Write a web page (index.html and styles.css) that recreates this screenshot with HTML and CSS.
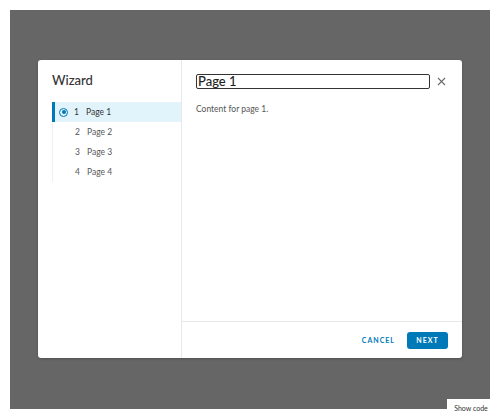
FILE: index.html
```html
<!DOCTYPE html>
<html lang="en">
<head>
  <meta charset="UTF-8" />
  <title>Wizard</title>
  <link rel="stylesheet" href="styles.css">
</head>
<body>

  <div class="stage">
    <div class="modal">
      <!-- step navigation -->
      <div class="side">
        <h3 class="side-title">Wizard</h3>
        <ul class="steps">
          <li class="step active">
            <span class="dot"></span><span class="num">1</span>Page 1
          </li>
          <li class="step"><span class="num">2</span>Page 2</li>
          <li class="step"><span class="num">3</span>Page 3</li>
          <li class="step"><span class="num">4</span>Page 4</li>
        </ul>
      </div>

      <div class="main">
        <div class="main-head">
          <h3 class="page-title">Page 1</h3>
          <button type="button" class="close">
            <svg width="9" height="9" viewBox="0 0 9 9">
              <path d="M1 1 L8 8 M8 1 L1 8" stroke="#6a6a6a" stroke-width="1.1" fill="none" />
            </svg>
          </button>
        </div>
        <div class="main-body">Content for page 1.</div>
        <div class="main-foot">
          <button type="button" class="btn-link">Cancel</button>
          <button type="button" class="btn-primary">Next</button>
        </div>
      </div>
    </div>
  </div>

  <div class="show-code">Show code</div>

</body>
</html>
```

FILE: styles.css
```css
* { box-sizing: border-box; }

body {
  margin: 0;
  background: #fff;
  font-family: Lato, "Noto Sans", sans-serif;
  color: #333;
}

.stage {
  margin: 10px;
  height: 399px;
  background: #666;
  display: flex;
  justify-content: center;
  align-items: flex-start;
  padding-top: 50px;
}

.modal {
  width: 424px;
  height: 298px;
  background: #fff;
  border-radius: 3px;
  display: flex;
  box-shadow: 0 1px 3px rgba(0,0,0,0.2);
}

.side {
  width: 144px;
  border-right: 1px solid #e8e8e8;
  padding: 13px 0 0 14px;
}

.side-title {
  margin: 0 0 14px;
  font-size: 13px;
  font-weight: 500;
  color: #333;
  line-height: 15px;
}

.steps {
  list-style: none;
  margin: 0;
  padding: 0;
  border-left: 1px solid #f0f0f0;
  height: 80px;
}

.step {
  height: 20px;
  display: flex;
  align-items: center;
  padding-left: 22px;
  font-size: 8.5px;
  color: #565656;
  position: relative;
}

.step.active {
  background: #e1f4fb;
  border-left: 3px solid #0079b8;
  margin-left: -1px;
  padding-left: 4px;
  color: #333;
}

.dot {
  width: 9px;
  height: 9px;
  border-radius: 50%;
  border: 1px solid #0079b8;
  margin-right: 6px;
  display: flex;
  align-items: center;
  justify-content: center;
}

.dot::after {
  content: "";
  width: 4px;
  height: 4px;
  border-radius: 50%;
  background: #0079b8;
}

.num {
  width: 12px;
}

.main {
  flex: 1;
  display: flex;
  flex-direction: column;
}

.main-head {
  display: flex;
  align-items: center;
  padding: 14px 15px 0 14px;
  gap: 5px;
}

.page-title {
  flex: 1;
  margin: 0;
  height: 15px;
  font-size: 13px;
  font-weight: 500;
  line-height: 13px;
  color: #222;
  border: 1px solid #333;
  border-radius: 2px;
  padding-left: 1px;
}

.close {
  background: none;
  border: none;
  padding: 0;
  width: 12px;
  height: 14px;
  display: flex;
  align-items: center;
  justify-content: center;
  cursor: pointer;
}

.main-body {
  flex: 1;
  padding: 15px 14px 0;
  font-size: 8.5px;
  color: #565656;
}

.main-foot {
  height: 37px;
  border-top: 1px solid #e8e8e8;
  display: flex;
  align-items: center;
  justify-content: flex-end;
  padding-right: 14px;
  gap: 12px;
}

.btn-link,
.btn-primary {
  font-family: inherit;
  font-size: 7px;
  font-weight: 700;
  letter-spacing: 1px;
  text-transform: uppercase;
  border: none;
  border-radius: 3px;
  height: 17px;
  cursor: pointer;
}

.btn-link {
  background: none;
  color: #0079b8;
  padding: 0;
}

.btn-primary {
  background: #0079b8;
  color: #fff;
  width: 41px;
  padding: 0;
}

.show-code {
  position: absolute;
  left: 447px;
  top: 399px;
  width: 48px;
  height: 17px;
  background: #fff;
  font-size: 7px;
  color: #333;
  display: flex;
  align-items: center;
  justify-content: center;
}
```
